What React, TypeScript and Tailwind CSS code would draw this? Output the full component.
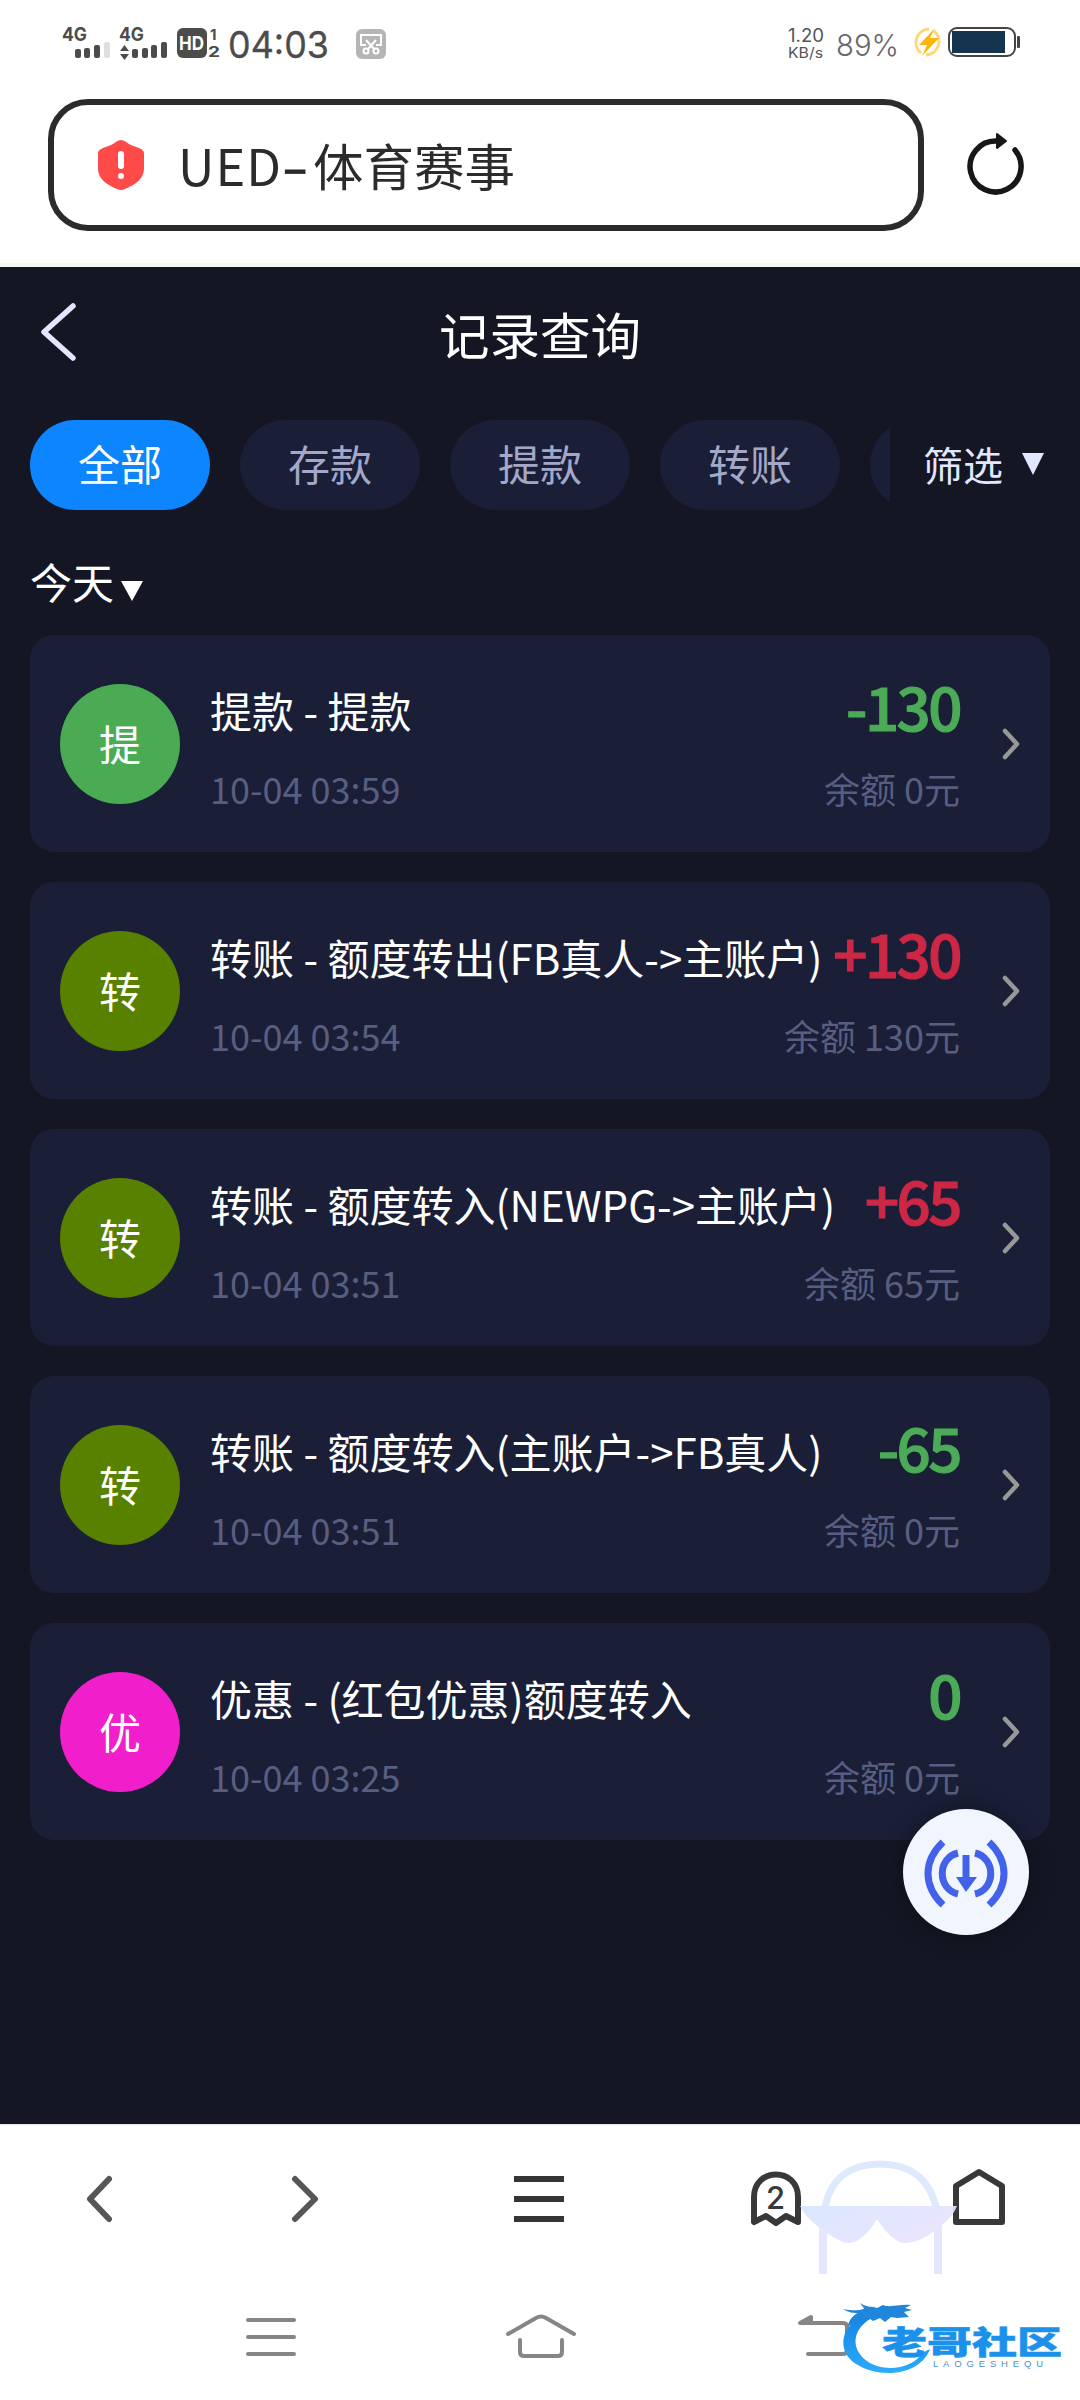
const records = [
  { badge: "提", color: "bg-[#4bab52]", title: "提款 - 提款", time: "10-04 03:59", amount: "-130", tone: "text-[#4bab57]", balance: "余额 0元" },
  { badge: "转", color: "bg-[#588100]", title: "转账 - 额度转出(FB真人->主账户)", time: "10-04 03:54", amount: "+130", tone: "text-[#cd2746]", balance: "余额 130元" },
  { badge: "转", color: "bg-[#588100]", title: "转账 - 额度转入(NEWPG->主账户)", time: "10-04 03:51", amount: "+65", tone: "text-[#cd2746]", balance: "余额 65元" },
  { badge: "转", color: "bg-[#588100]", title: "转账 - 额度转入(主账户->FB真人)", time: "10-04 03:51", amount: "-65", tone: "text-[#4bab57]", balance: "余额 0元" },
  { badge: "优", color: "bg-[#f01ecb]", title: "优惠 - (红包优惠)额度转入", time: "10-04 03:25", amount: "0", tone: "text-[#4bab57]", balance: "余额 0元" },
];

const tabs = ["全部", "存款", "提款", "转账", ""];

function StatusBar() {
  return (
    <div className="flex h-[84px] items-start justify-between pl-[60px] pr-[60px] pt-[12px]">
      <svg width="332" height="62" viewBox="60 12 332 62" fill="#4c4c4c">
        <g className="font-['Inter'] font-bold">
          <text x="62" y="41" fontSize="19" textLength="25" lengthAdjust="spacingAndGlyphs">4G</text>
          <text x="119" y="41" fontSize="19" textLength="25" lengthAdjust="spacingAndGlyphs">4G</text>
          <text x="210" y="40" fontSize="15" textLength="7">1</text>
          <text x="208" y="57" fontSize="15" textLength="12" lengthAdjust="spacingAndGlyphs">2</text>
        </g>
        <rect x="75" y="49" width="6" height="9" rx="2" />
        <rect x="84" y="48" width="6" height="10" rx="2" />
        <rect x="94" y="45" width="6" height="13" rx="2" />
        <rect x="104" y="42" width="6" height="16" rx="2" fill="#dedede" />
        <path d="M120 51l4.500-6 4.500 6zM120 54l4.500 6 4.500-6z" />
        <rect x="132" y="49" width="6" height="9" rx="2" />
        <rect x="142" y="48" width="6" height="10" rx="2" />
        <rect x="151" y="45" width="6" height="13" rx="2" />
        <rect x="161" y="42" width="6" height="16" rx="2" />
        <rect x="177" y="28" width="30" height="30" rx="6" />
        <text x="179" y="50" fontSize="19" fill="#fff" textLength="25" lengthAdjust="spacingAndGlyphs" className="font-['Inter'] font-bold">HD</text>
        <text x="228" y="58" fontSize="37" textLength="101" lengthAdjust="spacingAndGlyphs" className="font-['Inter']" stroke="#4c4c4c" strokeWidth="0.3">04:03</text>
        <rect x="356" y="29" width="30" height="30" rx="6" fill="#b5b5b5" />
        <g fill="none" stroke="#fff" strokeWidth="2">
          <path d="M366 45h-5v-10h20v10h-5M366 40l8 9M376 40l-8 9" />
          <circle cx="366" cy="51" r="2.500" />
          <circle cx="376" cy="51" r="2.500" />
        </g>
      </svg>
      <svg width="234" height="62" viewBox="786 12 234 62" fill="#555">
        <text x="788" y="42" fontSize="18" textLength="36" lengthAdjust="spacingAndGlyphs" className="font-['Inter']">1.20</text>
        <text x="788" y="58" fontSize="14.500" textLength="35" lengthAdjust="spacingAndGlyphs" className="font-['Inter']">KB/s</text>
        <text x="836" y="56" fontSize="30" fill="#686868" textLength="63" lengthAdjust="spacingAndGlyphs" className="font-['Inter'] font-light">89%</text>
        <path d="M921 53a13.500 13.500 0 0 1 8-24M934 31a13.500 13.500 0 0 1-8 24" fill="none" stroke="#fcd976" strokeWidth="3" />
        <path d="M935 28l-16 17h8l-5 11 17-18h-9z" fill="#fbb50e" />
        <rect x="949" y="28" width="66" height="28" rx="8" fill="#fff" stroke="#444" strokeWidth="2" />
        <rect x="952" y="31" width="53" height="22" fill="#15344f" />
        <rect x="1017" y="36" width="3" height="12" rx="1" fill="#444" />
      </svg>
    </div>
  );
}

function AddressBar() {
  return (
    <div className="flex items-center pl-[48px] pt-[15px]">
      <div className="flex h-[132px] w-[876px] items-center rounded-[40px] border-[6px] border-[#2b2b2b] pl-[43px]">
        <svg width="48" height="52" viewBox="0 0 48 52">
          <path d="M24 1c3 0 6 3 10 5l8 3c4 2 5 3 5 6v14c0 12-10 17-19 21q-4 2-8 0C11 46 1 41 1 29V15c0-3 1-4 5-6l8-3c4-2 7-5 10-5z" fill="#fe4a49" />
          <path d="M24 15v12M24 37v.01" stroke="#fff" strokeWidth="6" strokeLinecap="round" />
        </svg>
        <span className="-mt-[3px] ml-[33px] whitespace-nowrap text-[50.5px] leading-[60px] text-[#2b2b2b]">
          <span className="tracking-[1px]">UED</span>
          <span className="mr-[5px] inline-block w-[26px] origin-left scale-x-[1.5] [-webkit-text-stroke:0.8px_currentColor]">-</span>
          体育赛事
        </span>
      </div>
      <svg className="ml-[41px]" width="62" height="70" viewBox="965 130 62 70">
        <path d="M1015 150a25.500 25.500 0 1 1-19-9" fill="none" stroke="#171717" strokeWidth="5.500" strokeLinecap="round" />
        <path d="M997 134l9 7-9 7z" fill="#171717" stroke="#171717" strokeWidth="2" strokeLinejoin="round" />
      </svg>
    </div>
  );
}

function RecordCard({ record }: { record: (typeof records)[number] }) {
  return (
    <div className="flex h-[217px] items-center rounded-[24px] bg-[#1a1f37] pl-[30px] pr-[28px]">
      <div className={`flex size-[120px] items-center justify-center rounded-full pb-[2px] text-[42px] text-white ${record.color}`}>
        {record.badge}
      </div>
      <div className="ml-[30px] mt-[10px] flex w-[750px] flex-col gap-[19px]">
        <div className="flex h-[60px] items-center justify-between whitespace-nowrap">
          <span className="text-[42px] text-white">{record.title}</span>
          <span className={`-mt-[8px] text-[60px] font-medium tracking-[-2.5px] [-webkit-text-stroke:1.2px_currentColor] ${record.tone}`}>{record.amount}</span>
        </div>
        <div className="flex h-[60px] items-center justify-between text-[36px] text-[#585e80]">
          <span>{record.time}</span>
          <span>{record.balance}</span>
        </div>
      </div>
      <svg className="ml-auto" width="20" height="34" viewBox="0 0 20 34" fill="none">
        <path d="M3 4l12 13L3 30" stroke="#989898" strokeWidth="4.500" strokeLinecap="round" strokeLinejoin="round" />
      </svg>
    </div>
  );
}

function BrowserNav() {
  return (
    <div className="h-[276px] border-t border-[#e4e4ee] bg-white">
      <svg width="1080" height="275" viewBox="0 2125 1080 275" fill="none">
        <defs>
          <linearGradient id="shade" x1="0" y1="0" x2="1" y2="0.6">
            <stop offset="0" stopColor="#d5e6ff" />
            <stop offset="1" stopColor="#e9e2fe" />
          </linearGradient>
          <linearGradient id="dragon" x1="0" y1="0" x2="0" y2="1">
            <stop offset="0" stopColor="#1584e4" />
            <stop offset="1" stopColor="#2cabfb" />
          </linearGradient>
        </defs>
        <g stroke="#575757" strokeWidth="6" strokeLinecap="round" strokeLinejoin="round">
          <path d="M109 2179l-19 20 19 20M295 2179l20 20-20 20" />
        </g>
        <path d="M514 2179h50M514 2199h50M514 2219h50" stroke="#353535" strokeWidth="6" />

        <g stroke="#383838" strokeWidth="6" strokeLinejoin="round">
          <path d="M754 2222v-25c0-30 44-30 44 0v25l-12-6-10 7-10-7z" />
          <path d="M979 2172l23 14v36h-46v-36z" />
        </g>
        <text x="775.500" y="2209" fontSize="31" fill="#383838" textAnchor="middle" className="font-['Inter'] font-medium">2</text>

        <g opacity=".9">
          <path d="M825 2207c6-30 27-43 55-43s49 13 56 43" stroke="#dbe7fe" strokeWidth="7" />
          <path d="M823 2225v49M938 2225v49" stroke="#e1e4fe" strokeWidth="8" />
          <path d="M800 2206h157q-3 9-16 20-20 17-36 17c-9 0-19-10-28-24-8 14-19 24-28 24q-9 0-28-14-16-12-21-23z" fill="url(#shade)" />
        </g>

        <g stroke="#868686" strokeWidth="4" strokeLinecap="round" strokeLinejoin="round">
          <path d="M248 2320h46M248 2337h46M248 2354h46" />
          <path d="M508 2334l28-16q5-3 10 0l28 16M520 2340v12q0 4 4 4h34q4 0 4-4v-12" />
          <path d="M812 2323h31q4 0 4 4v23q0 4-4 4h-35" />
          <path d="M800 2323l11-6v6z" fill="#868686" />
        </g>

        <path d="M866 2315c-26 9-30 36-10 49 24 15 64 12 74-15l-8 4c-9 16-39 20-55 8-17-12-16-34 9-45z" fill="url(#dragon)" />
        <path d="M843 2309c15 3 18 0 21 0-1-3-3-4-4-6 7 5 13 3 17 5l6-3c7 3 15-1 28 0l-6 3 7 2-8 2 5 5-12 1-6-1-6 5-5-4-7 3-4-3c-12 2-16 6-22 9 3-8 6-12 11-14-7 0-10-1-15-4z" fill="#2086dc" />
        <text x="882" y="2354" fontSize="32" fill="#1b91ec" stroke="#1b91ec" strokeWidth="0.5" textLength="180" lengthAdjust="spacingAndGlyphs" className="font-['Noto_Sans_CJK_SC'] font-black">老哥社区</text>
        <text x="933" y="2367" fontSize="9.500" fill="#4a8fd4" textLength="110" className="font-['Liberation_Sans']">LAOGESHEQU</text>
      </svg>
    </div>
  );
}

export default function App() {
  return (
    <div className="relative flex h-[2400px] w-[1080px] flex-col overflow-hidden bg-[#141624] font-['Noto_Sans_CJK_SC',sans-serif]">
      <header className="h-[267px] border-b-4 border-[#f6f8f8] bg-white">
        <StatusBar />
        <AddressBar />
      </header>

      <main className="flex-1 px-[30px]">
        <div className="grid h-[138px] grid-cols-[100px_1fr_100px] items-center">
          <svg className="ml-[9px] -mt-[9px]" width="40" height="62" viewBox="0 0 40 62" fill="none">
            <path d="M34 5L5 31l29 26" stroke="#e2e7ff" strokeWidth="5.500" strokeLinecap="round" strokeLinejoin="round" />
          </svg>
          <h1 className="pb-[5px] text-center text-[50.5px] text-white">记录查询</h1>
        </div>

        <div className="-mr-[30px] flex">
          <div className="flex w-[860px] gap-[30px] overflow-hidden py-[15px]">
            {tabs.map((tab, index) => (
              <div
                key={index}
                className={`flex h-[90px] w-[180px] shrink-0 items-center justify-center rounded-full pb-[5px] text-[42px] ${index === 0 ? "bg-[#0c85ff] text-white" : "bg-[#1a1f37] text-[#a3a8c9]"}`}
              >
                {tab}
              </div>
            ))}
          </div>
          <div className="flex flex-1 items-center pb-[3px] pl-[33px] text-[40px] text-[#e2e7ff]">
            筛选
            <svg className="ml-[19px]" width="22" height="22" viewBox="0 0 22 22">
              <path d="M0 0h22L11 22z" fill="#e2e7ff" />
            </svg>
          </div>
        </div>

        <div className="flex h-[110px] items-center text-[42px] text-white">
          今天
          <svg className="ml-[7px] mt-[22px]" width="22" height="20" viewBox="0 0 22 20">
            <path d="M0 0h22L11 20z" fill="#fff" />
          </svg>
        </div>

        <div className="flex flex-col gap-[30px]">
          {records.map((record, index) => (
            <RecordCard key={index} record={record} />
          ))}
        </div>
      </main>

      <button className="absolute left-[903px] top-[1809px] size-[126px] rounded-full bg-[#f0f5fe] shadow-[0_0_24px_rgba(0,0,0,0.35)]">
        <svg width="126" height="126" viewBox="0 0 126 126" fill="none" stroke="#4262ea" strokeWidth="7">
          <path d="M40 33C20 52 20 77 40 96M86 33c20 19 20 44 0 63" />
          <path d="M55 44c-21 5-21 36 0 41M72 44c21 5 21 36 0 41" />
          <path d="M63 46v24" />
          <path d="M53 68h21L63 83z" fill="#4262ea" stroke="none" />
        </svg>
      </button>

      <BrowserNav />
    </div>
  );
}
